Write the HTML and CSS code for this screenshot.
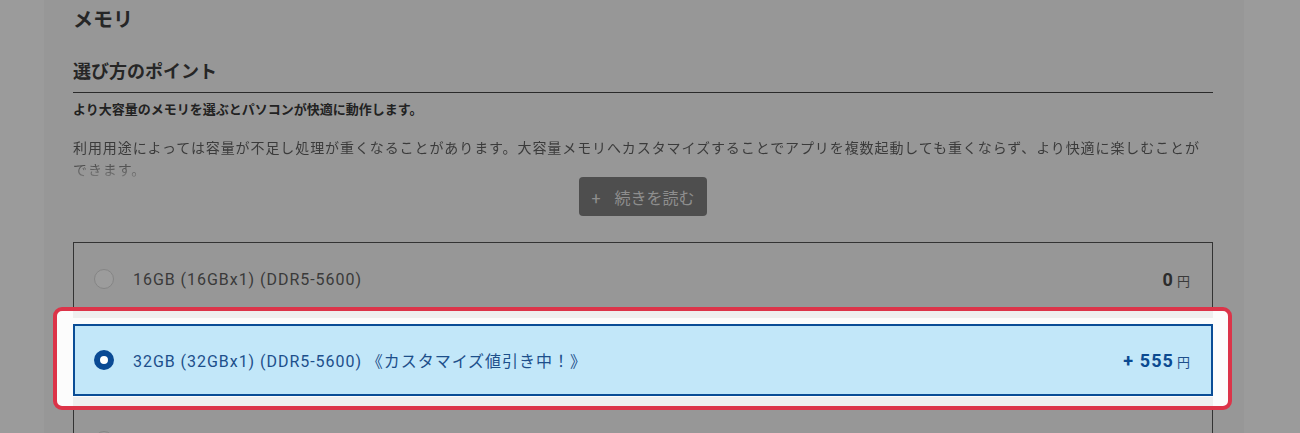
FILE: index.html
```html
<!DOCTYPE html>
<html lang="ja">
<head>
<meta charset="UTF-8">
<meta name="viewport" content="width=device-width, initial-scale=1.0">
<title>メモリ</title>
<link rel="stylesheet" href="styles.css">
</head>
<body>

<!-- カスタマイズ項目: メモリ -->
<section class="panel">
    <h2 class="panel-title">メモリ</h2>

    <div class="point">
        <h3 class="point-title">選び方のポイント</h3>
        <p class="point-lead">より大容量のメモリを選ぶとパソコンが快適に動作します。</p>
        <p class="point-text">利用用途によっては容量が不足し処理が重くなることがあります。大容量メモリへカスタマイズすることでアプリを複数起動しても重くならず、より快適に楽しむことができます。</p>
        <div class="point-more">
            <button class="btn-more"><span class="btn-more-plus">+</span>続きを読む</button>
        </div>
    </div>

    <!-- 選択肢 -->
    <div class="options">
        <label class="option">
            <span class="radio"></span>
            <span class="option-name">16GB (16GBx1) (DDR5-5600)</span>
            <span class="option-price"><b>0</b>円</span>
        </label>

        <div class="focus-frame">
            <label class="option is-checked">
                <span class="radio"></span>
                <span class="option-name">32GB (32GBx1) (DDR5-5600) 《カスタマイズ値引き中！》</span>
                <span class="option-price"><b>+ 555</b>円</span>
            </label>
        </div>

        <label class="option">
            <span class="radio"></span>
            <span class="option-name">64GB (32GBx2) (DDR5-5600)</span>
            <span class="option-price"><b>+ 19,800</b>円</span>
        </label>
    </div>
</section>

</body>
</html>
```

FILE: styles.css
```css
html, body {
    margin: 0;
    padding: 0;
    height: 100%;
    overflow: hidden;
}

body {
    background-color: #9b9b9b;
    font-family: Roboto, "Noto Sans CJK JP", sans-serif;
    color: #3a3a3a;
}

.panel {
    width: 1140px;
    min-height: 100%;
    margin-left: 44px;
    padding: 6px 31px 0 29px;
    background-color: #979797;
}

.panel-title {
    margin: 0;
    font-size: 20px;
    line-height: 28px;
    font-weight: bold;
    color: #262626;
}

/* 選び方のポイント */
.point-title {
    margin: 26px 0 0;
    padding-bottom: 8px;
    border-bottom: 1px solid #2a2a2a;
    font-size: 18px;
    line-height: 24px;
    font-weight: bold;
    color: #262626;
}

.point-lead {
    margin: 7px 0 0;
    font-size: 13px;
    line-height: 20px;
    font-weight: bold;
    color: #222;
}

.point-text {
    margin: 17px 0 0;
    max-height: 40px;
    overflow: hidden;
    font-size: 14px;
    line-height: 22px;
    letter-spacing: 0.065em;
    color: #3b3b3b;
    -webkit-mask-image: linear-gradient(to bottom, #000 55%, rgba(0, 0, 0, 0.35));
    mask-image: linear-gradient(to bottom, #000 55%, rgba(0, 0, 0, 0.35));
}

.point-more {
    display: flex;
    justify-content: center;
}

.btn-more {
    height: 39px;
    padding: 0 12px;
    border: none;
    border-radius: 4px;
    background-color: #4e4e4e;
    color: #8e8e8e;
    font-family: Roboto, "Noto Sans CJK JP", sans-serif;
    font-size: 16px;
    cursor: pointer;
}

.btn-more-plus {
    margin-right: 14px;
}

/* 選択肢 */
.options {
    margin-top: 26px;
}

.option {
    display: flex;
    align-items: center;
    box-sizing: border-box;
    height: 74px;
    margin-bottom: 8px;
    padding: 0 22px 0 20px;
    border: 1px solid #333;
    cursor: pointer;
}

.radio {
    flex: none;
    box-sizing: border-box;
    width: 20px;
    height: 20px;
    margin-right: 19px;
    border: 1px solid #858585;
    border-radius: 50%;
    background-color: #9c9c9c;
}

.option-name {
    flex: 1;
    font-size: 16px;
    letter-spacing: 0.06em;
}

.option-price {
    font-size: 13px;
}

.option-price b {
    margin-right: 3px;
    font-size: 18px;
    letter-spacing: 0.06em;
    color: #2c2c2c;
}

/* 注目枠 */
.focus-frame {
    position: relative;
    margin: -17px -19px -6px -20px;
    padding: 13px 15px 10px 16px;
    border: 4px solid #dc3449;
    border-radius: 9px;
    background:
        linear-gradient(#efefef, #efefef) no-repeat 16px 0 / calc(100% - 31px) 7px,
        linear-gradient(#efefef, #efefef) no-repeat 16px 100% / calc(100% - 31px) 9px,
        #fcfcfc;
}

.option.is-checked {
    height: 72px;
    margin-bottom: 0;
    padding-left: 19px;
    padding-right: 21px;
    border: 2px solid #0a4d96;
    background-color: #c2e7f9;
    color: #1d4f8b;
}

.option.is-checked .radio {
    border: 6px solid #0a4a94;
    background-color: #fff;
}

.option.is-checked .option-price {
    color: #1d4f8b;
}

.option.is-checked .option-price b {
    color: #0b4a91;
}
```
